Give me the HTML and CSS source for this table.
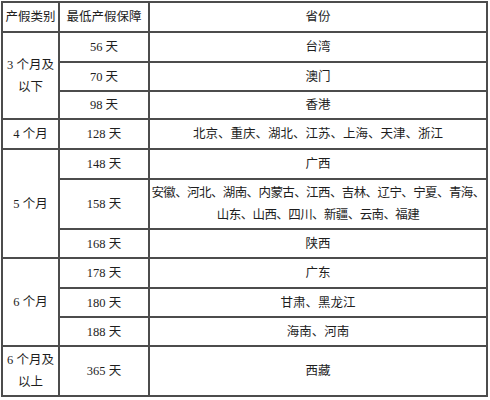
FILE: index.html
```html
<!DOCTYPE html>
<html lang="zh-CN">
<head>
<meta charset="utf-8">
<title>产假类别</title>
<link rel="stylesheet" href="styles.css">
</head>
<body>
<div class="page">
<table class="leave">
  <colgroup>
    <col class="c1">
    <col class="c2">
    <col class="c3">
  </colgroup>
  <tr class="h30"><td>产假类别</td><td>最低产假保障</td><td>省份</td></tr>
  <tr class="h30"><td rowspan="3">3 个月及<br>以下</td><td>56 天</td><td>台湾</td></tr>
  <tr class="h29"><td>70 天</td><td>澳门</td></tr>
  <tr class="h28"><td>98 天</td><td>香港</td></tr>
  <tr class="h30"><td>4 个月</td><td>128 天</td><td>北京、重庆、湖北、江苏、上海、天津、浙江</td></tr>
  <tr class="h30"><td rowspan="3">5 个月</td><td>148 天</td><td>广西</td></tr>
  <tr class="h50"><td>158 天</td><td class="wide">安徽、河北、湖南、内蒙古、江西、吉林、辽宁、宁夏、青海、<br>山东、山西、四川、新疆、云南、福建</td></tr>
  <tr class="h29"><td>168 天</td><td>陕西</td></tr>
  <tr class="h30"><td rowspan="3">6 个月</td><td>178 天</td><td>广东</td></tr>
  <tr class="h29"><td>180 天</td><td>甘肃、黑龙江</td></tr>
  <tr class="h29"><td>188 天</td><td>海南、河南</td></tr>
  <tr class="h50"><td>6 个月及<br>以上</td><td>365 天</td><td>西藏</td></tr>
</table>
</div>
</body>
</html>
```
FILE: styles.css
```css
html, body {
  margin: 0;
  padding: 0;
  background: #fff;
}
.page {
  padding: 1px 0 0 1px;
}
.leave {
  border-collapse: collapse;
  table-layout: fixed;
  width: 485px;
  font-family: "Liberation Serif", "Noto Sans CJK SC", serif;
  font-size: 12.5px;
  color: #1e1e1e;
  line-height: 22px;
}
.c1 { width: 57px; }
.c2 { width: 90px; }
.c3 { width: 338px; }
.leave td {
  border: 2px solid #4c4c4c;
  text-align: center;
  vertical-align: middle;
  padding: 0;
  white-space: nowrap;
}
.h28 { height: 28px; }
.h29 { height: 29px; }
.h30 { height: 30px; }
.h50 { height: 50px; }
.wide { letter-spacing: -0.6px; }
```
